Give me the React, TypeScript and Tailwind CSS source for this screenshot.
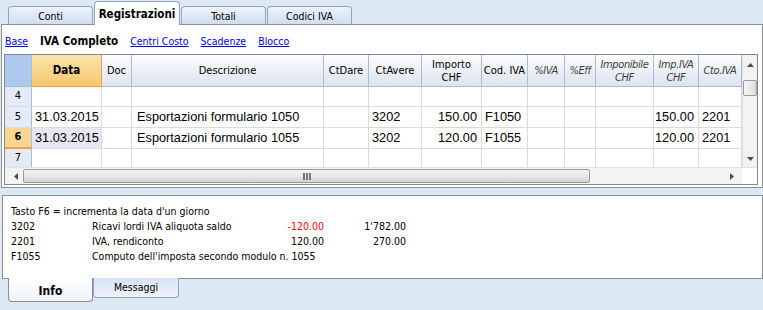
import React from 'react';

const UI = '"DejaVu Sans Condensed", "Liberation Sans", sans-serif';
const CELL = '"Liberation Sans", Arial, sans-serif';

interface Col {
  w: string;
  label: string;
  sub?: string;
  italic?: boolean;
}

const COLS: Col[] = [
  { w: 'w-[70px]', label: 'Data' },
  { w: 'w-[30px]', label: 'Doc' },
  { w: 'w-[192px]', label: 'Descrizione' },
  { w: 'w-[45px]', label: 'CtDare' },
  { w: 'w-[53px]', label: 'CtAvere' },
  { w: 'w-[60px]', label: 'Importo', sub: 'CHF' },
  { w: 'w-[46px]', label: 'Cod. IVA' },
  { w: 'w-[37px]', label: '%IVA', italic: true },
  { w: 'w-[31px]', label: '%Eff', italic: true },
  { w: 'w-[58px]', label: 'Imponibile', sub: 'CHF', italic: true },
  { w: 'w-[45px]', label: 'Imp.IVA', sub: 'CHF', italic: true },
  { w: 'w-[43px]', label: 'Cto.IVA', italic: true },
];

// right-aligned numeric columns
const RIGHT = [5, 9, 10];

const ROWS = [
  { n: '4', h: 'h-[20px]', cells: [] as string[] },
  { n: '5', h: 'h-[21px]', cells: ['31.03.2015', '', 'Esportazioni formulario 1050', '', '3202', '150.00', 'F1050', '', '', '', '150.00', '2201'] },
  { n: '6', h: 'h-[21px]', cells: ['31.03.2015', '', 'Esportazioni formulario 1055', '', '3202', '120.00', 'F1055', '', '', '', '120.00', '2201'], active: true },
  { n: '7', h: 'h-[18px]', cells: [] as string[], last: true },
];

function Arrow({ dir }: { dir: 'up' | 'down' | 'left' | 'right' }) {
  const pts = {
    up: '0,4 3.5,0 7,4',
    down: '0,0 3.5,4 7,0',
    left: '4,0 0,3.5 4,7',
    right: '0,0 4,3.5 0,7',
  }[dir];
  const vert = dir === 'up' || dir === 'down';
  return (
    <svg width={vert ? 7 : 4} height={vert ? 4 : 7} viewBox={vert ? '0 0 7 4' : '0 0 4 7'}>
      <polygon points={pts} fill="#4d4d4d" />
    </svg>
  );
}

function TopTab({ label, active }: { label: string; active?: boolean }) {
  if (active) {
    return (
      <div className="relative z-10 ml-px mb-[-1px] flex h-[24px] w-[86px] items-start justify-center rounded-t-[4px] border border-b-0 border-[#8ea3bf] bg-white pt-[4px] text-[11.5px] font-bold text-black">
        {label}
      </div>
    );
  }
  return (
    <div className="ml-px flex h-[18px] w-[85px] items-center justify-center rounded-t-[4px] border border-b-0 border-[#8ea3bf] bg-gradient-to-b from-[#eef3fb] to-[#cfdef2] pt-[2px] text-[10.5px] text-black">
      {label}
    </div>
  );
}

function Header() {
  return (
    <div className="flex h-[32px] border-b border-[#a9bcd6]">
      <div className="w-[27px] shrink-0 border-r border-[#a9bcd6] bg-[#aec8ee]" />
      {COLS.map((c, i) => {
        const isData = i === 0;
        return (
          <div
            key={c.label}
            className={`${c.w} flex shrink-0 flex-col items-center justify-center whitespace-nowrap border-r leading-[13px] ${
              isData
                ? 'mb-[-1px] border-b border-[#f0a23c] border-r-[#f0a23c] bg-gradient-to-b from-[#fbe3ad] to-[#f6c86c] text-[11.5px] font-bold'
                : 'border-[#a9bcd6] bg-gradient-to-b from-[#fdfdfe] to-[#dce4ef] text-[11px]'
            } ${c.italic ? 'italic text-[#3c3c3c] tracking-[-0.4px]' : 'text-black'}`}
          >
            <span>{c.label}</span>
            {c.sub && <span>{c.sub}</span>}
          </div>
        );
      })}
    </div>
  );
}

function Body() {
  return (
    <div>
      {ROWS.map((r) => (
        <div key={r.n} className={`flex ${r.h} ${r.last ? '' : 'border-b border-[#dadada]'}`}>
          <div
            className={`flex w-[27px] shrink-0 items-center justify-center border-r text-[11px] ${
              r.active
                ? 'mb-[-1px] border-b-2 border-[#f0a23c] border-r-[#a9bcd6] bg-[#fbd592] font-bold'
                : 'border-[#a9bcd6] bg-[#e4ebf6]'
            }`}
            style={{ fontFamily: UI }}
          >
            {r.n}
          </div>
          {COLS.map((c, i) => {
            const v = r.cells[i] ?? '';
            const sel = r.active && i === 0;
            return (
              <div
                key={c.label}
                className={`${c.w} flex shrink-0 items-center whitespace-nowrap border-r border-[#dadada] text-[12.75px] text-black ${
                  RIGHT.includes(i) ? 'justify-end pr-[4px]' : i === 2 ? 'pl-[5px]' : 'pl-[3px]'
                } ${sel ? 'bg-[#e6e6f5]' : ''}`}
                style={{ fontFamily: CELL }}
              >
                {v}
              </div>
            );
          })}
        </div>
      ))}
    </div>
  );
}

function VScroll() {
  return (
    <div className="flex w-[15px] shrink-0 flex-col items-center border-l border-[#e3e3e3] bg-[#f3f3f3]">
      <div className="flex h-[17px] items-center justify-center pt-[2px]">
        <Arrow dir="up" />
      </div>
      <div className="mt-[8px] h-[16px] w-[14px] rounded-[2px] border border-[#9b9b9b] bg-gradient-to-r from-[#f6f6f6] to-[#dcdcdc]" />
      <div className="flex-1" />
      <div className="flex h-[17px] items-center justify-center">
        <Arrow dir="down" />
      </div>
    </div>
  );
}

function HScroll() {
  return (
    <div className="flex h-[17px] border-t border-[#e0e0e0]">
      <div className="flex w-[737px] items-center bg-[#f3f3f3]">
        <div className="flex w-[18px] justify-center pl-[4px]">
          <Arrow dir="left" />
        </div>
        <div className="relative flex h-[14px] w-[567px] items-center justify-center rounded-[2px] border border-[#9b9b9b] bg-gradient-to-b from-[#f5f5f7] via-[#e8e8ec] to-[#d2d2d6]">
          <div className="flex gap-[1px]">
            <div className="h-[7px] w-[2px] bg-[#777]" />
            <div className="h-[7px] w-[2px] bg-[#777]" />
            <div className="h-[7px] w-[2px] bg-[#777]" />
          </div>
        </div>
        <div className="flex-1" />
        <div className="flex w-[16px] justify-center pr-[4px]">
          <Arrow dir="right" />
        </div>
      </div>
      <div className="w-[15px] bg-white" />
    </div>
  );
}

export default function App() {
  return (
    <div className="h-[310px] w-[763px] overflow-hidden bg-[#dde8f5]" style={{ fontFamily: UI }}>
      {/* top tabs */}
      <div className="flex h-[24px] items-end pl-[7px]">
        <TopTab label="Conti" />
        <TopTab label="Registrazioni" active />
        <TopTab label="Totali" />
        <TopTab label="Codici IVA" />
      </div>

      {/* main panel */}
      <div className="ml-px h-[164px] w-[762px] border border-[#8e8f8f] bg-white">
        <div className="flex h-[29px] items-center gap-[12px] pl-[3px] pt-[4px] text-[10.5px]">
          <a className="text-[#0000ee] underline">Base</a>
          <span className="text-[11.5px] font-bold text-black">IVA Completo</span>
          <a className="text-[#0000ee] underline">Centri Costo</a>
          <a className="text-[#0000ee] underline">Scadenze</a>
          <a className="text-[#0000ee] underline">Blocco</a>
        </div>
        <div className="ml-[2px] w-[754px] border border-[#828790]">
          <div className="flex">
            <div className="w-[737px] shrink-0">
              <Header />
              <Body />
            </div>
            <VScroll />
          </div>
          <HScroll />
        </div>
      </div>

      {/* info panel */}
      <div className="ml-[2px] mt-[7px] h-[84px] w-[761px] border border-[#8e8f8f] bg-white pl-[8px] pt-[8px] text-[10.5px] leading-[15px] text-black">
        <div>Tasto F6 = incrementa la data d'un giorno</div>
        <div className="flex">
          <span className="w-[81px]">3202</span>
          <span className="w-[172px]">Ricavi lordi IVA aliquota saldo</span>
          <span className="w-[60px] text-right text-[#ff0000]">-120.00</span>
          <span className="w-[82px] text-right">1'782.00</span>
        </div>
        <div className="flex">
          <span className="w-[81px]">2201</span>
          <span className="w-[172px]">IVA, rendiconto</span>
          <span className="w-[60px] text-right">120.00</span>
          <span className="w-[82px] text-right">270.00</span>
        </div>
        <div className="flex whitespace-nowrap">
          <span className="w-[81px]">F1055</span>
          <span>Computo dell'imposta secondo modulo n. 1055</span>
        </div>
      </div>

      {/* bottom tabs */}
      <div className="mt-[-1px] flex pl-[8px]">
        <div className="relative z-10 flex h-[24px] w-[85px] items-center justify-center rounded-b-[4px] border border-t-0 border-[#8e8f8f] bg-gradient-to-b from-white to-[#eef2f8] pt-[2px] text-[12px] font-bold">
          Info
        </div>
        <div className="flex h-[20px] w-[86px] items-center justify-center rounded-b-[4px] border border-t-0 border-[#8ea3bf] bg-gradient-to-b from-[#d6e3f5] to-[#eef3fb] text-[10.5px]">
          Messaggi
        </div>
      </div>
    </div>
  );
}
